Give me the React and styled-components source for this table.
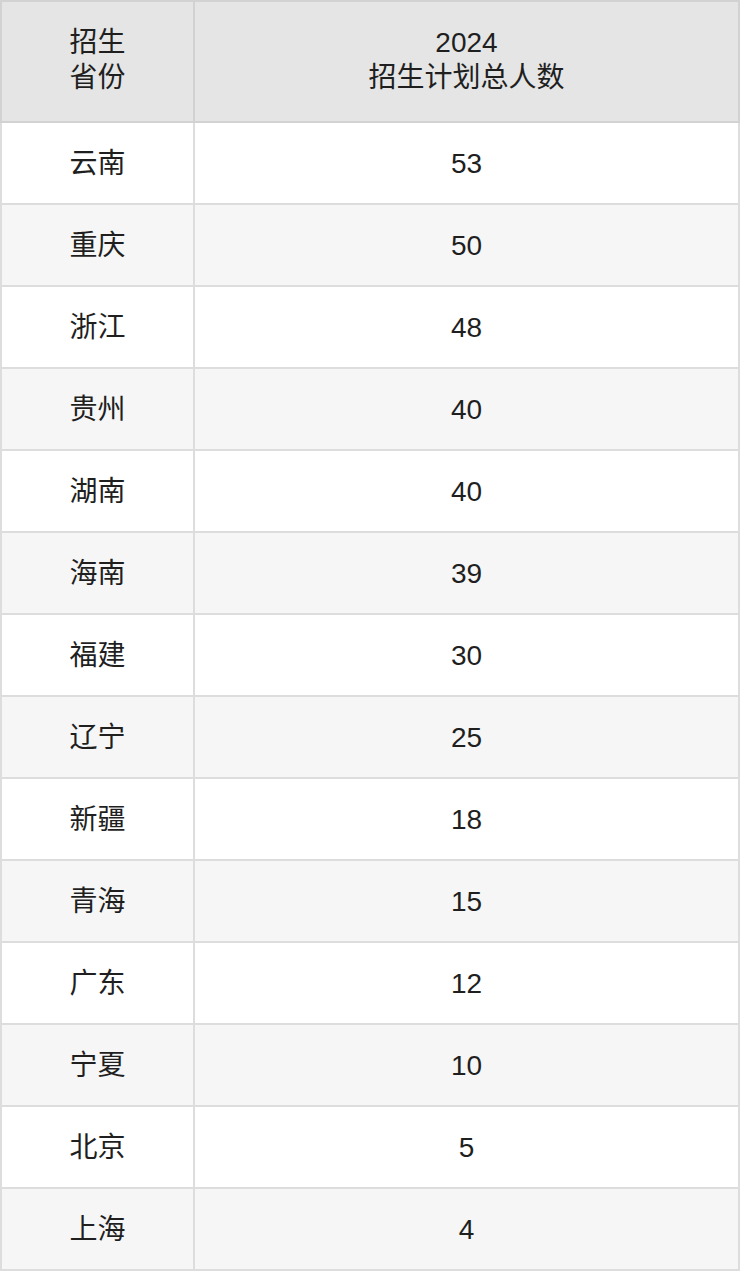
import React from "react";
import styled, { createGlobalStyle } from "styled-components";

const rows = [
  ["云南", "53"],
  ["重庆", "50"],
  ["浙江", "48"],
  ["贵州", "40"],
  ["湖南", "40"],
  ["海南", "39"],
  ["福建", "30"],
  ["辽宁", "25"],
  ["新疆", "18"],
  ["青海", "15"],
  ["广东", "12"],
  ["宁夏", "10"],
  ["北京", "5"],
  ["上海", "4"],
];

const App = () => {
  return (
    <>
      <GlobalStyle />
      <Table>
        <colgroup>
          <ProvCol />
          <col />
        </colgroup>
        <thead>
          <tr>
            <Th>
              招生
              <br />
              省份
            </Th>
            <Th>
              2024
              <br />
              招生计划总人数
            </Th>
          </tr>
        </thead>
        <tbody>
          {rows.map(([prov, num], i) => (
            <Row key={prov} $odd={i % 2 === 1}>
              <Td>{prov}</Td>
              <Td>{num}</Td>
            </Row>
          ))}
        </tbody>
      </Table>
    </>
  );
};

export default App;

const GlobalStyle = createGlobalStyle`
  body {
    margin: 0;
    background: #fff;
    font-family: "Liberation Sans", "Noto Sans CJK SC", sans-serif;
  }
`;

const Table = styled.table`
  width: 740px;
  border-collapse: collapse;
  table-layout: fixed;
  color: #1f1f1f;
  font-size: 28px;
`;

const ProvCol = styled.col`
  width: 193px;
`;

const Th = styled.th`
  height: 121px;
  padding: 0 0 3px;
  background: #e5e5e5;
  border: 2px solid #d2d2d2;
  font-weight: normal;
  line-height: 35px;
  text-align: center;
  vertical-align: middle;
  box-sizing: border-box;
`;

const Row = styled.tr`
  background: ${(p) => (p.$odd ? "#f6f6f6" : "#ffffff")};
`;

const Td = styled.td`
  height: 82px;
  padding: 0;
  border: 2px solid #dddddd;
  text-align: center;
  vertical-align: middle;
  line-height: 35px;
  box-sizing: border-box;
`;
